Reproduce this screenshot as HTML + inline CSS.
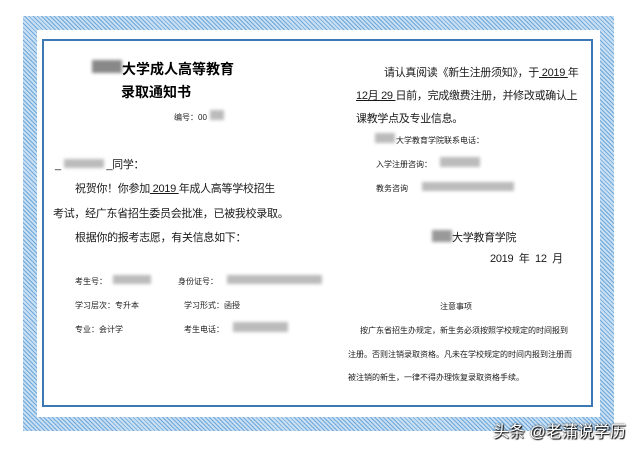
<!DOCTYPE html>
<html><head><meta charset="utf-8"><style>
body{margin:0;width:640px;height:450px;background:#fff;position:relative;overflow:hidden;font-family:"Liberation Sans","Noto Sans CJK SC",sans-serif;color:#1a1a1a}
.band{position:absolute;left:23px;top:16px;width:591px;height:415px;box-sizing:border-box;border:14px solid transparent;
border-image:repeating-linear-gradient(45deg,#6fa8da 0 1px,#c8dff3 1px 3px) 14}
.frame{position:absolute;left:42px;top:39px;width:551px;height:368px;box-sizing:border-box;border:2px solid #3c78b4;background:#fff}
.t{position:absolute;white-space:nowrap}
.b{font-size:14px;font-weight:bold;color:#000}
.m{font-size:11px;letter-spacing:-0.3px}
.s{font-size:8px}
.blur{position:absolute;background:#bbb;filter:blur(1.5px)}
</style></head><body>
<div class="band"></div>
<div class="frame"></div>
<div class="blur" style="left:92px;top:60px;width:30px;height:13px;background:#888"></div>
<div class="t b" style="left:122px;top:59px">大学成人高等教育</div>
<div class="t b" style="left:121px;top:82px">录取通知书</div>
<div class="t s" style="left:174px;top:112px">编号：00</div>
<div class="blur" style="left:210px;top:110px;width:14px;height:10px"></div>
<div class="t m" style="left:55px;top:156px">_ <span style="display:inline-block;width:40px;height:9px;background:#bbb;filter:blur(1.5px)"></span> _同学：</div>
<div class="t m" style="left:75px;top:180px">祝贺你！你参加<u>&nbsp;2019&nbsp;</u>年成人高等学校招生</div>
<div class="t m" style="left:53px;top:205px">考试，经广东省招生委员会批准，已被我校录取。</div>
<div class="t m" style="left:75px;top:229px">根据你的报考志愿，有关信息如下：</div>
<div class="t s" style="left:75px;top:276px">考生号：</div>
<div class="blur" style="left:113px;top:275px;width:38px;height:9px"></div>
<div class="t s" style="left:178px;top:276px">身份证号：</div>
<div class="blur" style="left:227px;top:275px;width:95px;height:9px"></div>
<div class="t s" style="left:75px;top:300px">学习层次：专升本</div>
<div class="t s" style="left:184px;top:300px">学习形式：函授</div>
<div class="t s" style="left:75px;top:324px">专业：会计学</div>
<div class="t s" style="left:184px;top:324px">考生电话：</div>
<div class="blur" style="left:233px;top:322px;width:55px;height:10px"></div>
<div class="t m" style="left:384px;top:64px">请认真阅读《新生注册须知》，于<u>&nbsp;2019&nbsp;</u>年</div>
<div class="t m" style="left:356px;top:87px"><u>12月&nbsp;29&nbsp;</u>日前，完成缴费注册，并修改或确认上</div>
<div class="t m" style="left:356px;top:110px">课教学点及专业信息。</div>
<div class="blur" style="left:375px;top:133px;width:20px;height:10px"></div>
<div class="t s" style="left:396px;top:135px">大学教育学院联系电话：</div>
<div class="t s" style="left:376px;top:159px">入学注册咨询：</div>
<div class="blur" style="left:440px;top:157px;width:40px;height:10px"></div>
<div class="t s" style="left:376px;top:183px">教务咨询</div>
<div class="blur" style="left:422px;top:182px;width:92px;height:9px"></div>
<div class="blur" style="left:432px;top:230px;width:20px;height:12px;background:#999"></div>
<div class="t m" style="left:452px;top:229px">大学教育学院</div>
<div class="t m" style="left:490px;top:250px">2019&nbsp; 年&nbsp; 12&nbsp; 月</div>
<div class="t s" style="left:440px;top:301px">注意事项</div>
<div class="t s" style="left:360px;top:325px">按广东省招生办规定，新生务必须按照学校规定的时间报到</div>
<div class="t s" style="left:348px;top:349px">注册。否则注销录取资格。凡未在学校规定的时间内报到注册而</div>
<div class="t s" style="left:348px;top:372px">被注销的新生，一律不得办理恢复录取资格手续。</div>
<div class="t" style="left:493px;top:418px;font-size:16px;color:#fff;text-shadow:0 0 2px #000,1px 1px 1px #000">头条 @老蒲说学历</div>
</body></html>
